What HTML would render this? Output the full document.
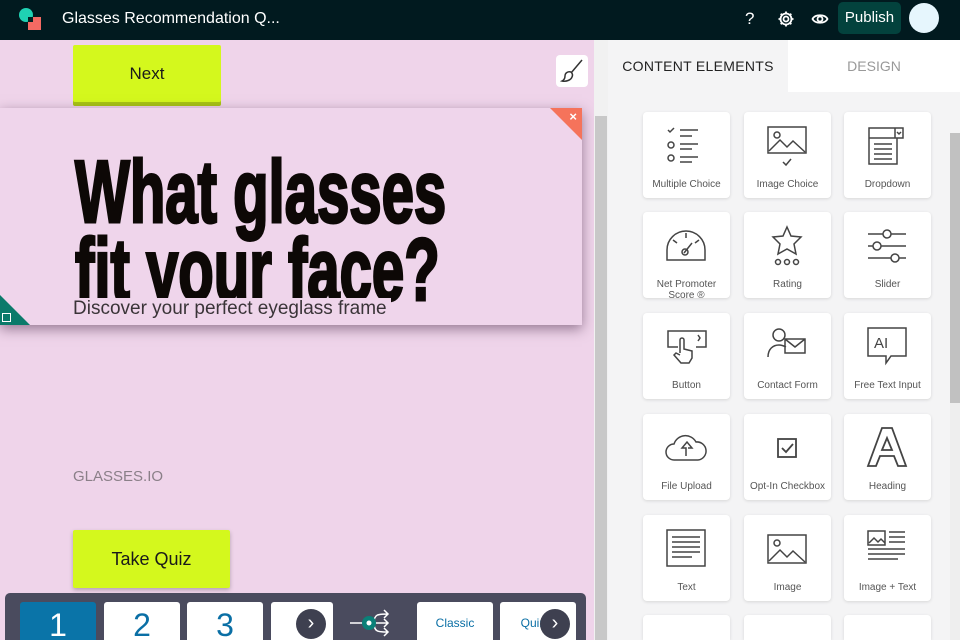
<!DOCTYPE html>
<html><head><meta charset="utf-8"><style>
*{margin:0;padding:0;box-sizing:border-box}
html,body{width:960px;height:640px;overflow:hidden}
body{font-family:"Liberation Sans",sans-serif;background:#f4f4f5;position:relative}
.top{position:absolute;left:0;top:0;width:960px;height:40px;background:#011a1f;color:#fff}
.canvas{position:absolute;left:0;top:40px;width:594px;height:600px;background:#efd4ea;overflow:hidden}
.sb{position:absolute;left:594px;top:40px;width:14px;height:600px;background:#f1f1f1}
.panel{position:absolute;left:608px;top:40px;width:352px;height:600px;background:#f4f4f5;overflow:hidden}
.card{position:absolute;width:87px;height:86px;background:#fff;border-radius:4px;box-shadow:0 1px 3px rgba(0,0,0,.12);text-align:center;font-size:10px;color:#555}
.card svg{position:absolute;left:21px;top:12px}
.card span{position:absolute;left:0;right:0;top:67px;line-height:11px}
.btn{position:absolute;background:#d4f81d;color:#1a1a1a;text-align:center;box-shadow:0 2px 4px rgba(0,0,0,.25);border-radius:2px}
.pg{position:absolute;top:562px;width:76px;height:38px;background:#fff;border-radius:3px 3px 0 0;color:#0a6fa5;font-size:32px;text-align:center;line-height:46px;overflow:hidden}
</style></head><body>
<div class="top">
 <svg style="position:absolute;left:18px;top:7px" width="26" height="24"><circle cx="8" cy="8" r="7" fill="#1fd1b3"/><rect x="10" y="10" width="13" height="13" fill="#f46a63"/><rect x="10" y="10" width="5" height="5" fill="#022"/></svg>
 <div style="position:absolute;left:62px;top:10px;font-size:16px">Glasses Recommendation Q...</div>
 <div style="position:absolute;left:745px;top:9px;font-size:17px">?</div>
 <svg style="position:absolute;left:777px;top:10px" width="18" height="18" viewBox="0 0 18 18" fill="none" stroke="#fff" stroke-width="1.8"><circle cx="9" cy="9" r="2.5"/><path d="M9 1.5v2.5M9 14v2.5M1.5 9h2.5M14 9h2.5M3.7 3.7l1.8 1.8M12.5 12.5l1.8 1.8M3.7 14.3l1.8-1.8M12.5 5.5l1.8-1.8"/><circle cx="9" cy="9" r="5.5"/></svg>
 <svg style="position:absolute;left:811px;top:10px" width="18" height="18" viewBox="0 0 18 18" fill="none" stroke="#fff" stroke-width="1.8"><path d="M1.5 9C4 4 14 4 16.5 9 14 14 4 14 1.5 9z"/><circle cx="9" cy="9" r="2.5"/></svg>
 <div style="position:absolute;left:838px;top:2px;width:63px;height:32px;background:#03423d;border-radius:5px;font-size:15px;line-height:32px;text-align:center">Publish</div>
 <div style="position:absolute;left:909px;top:3px;width:30px;height:30px;border-radius:50%;background:#e6f6fd"></div>
</div>
<div class="canvas">
 <div class="btn" style="left:73px;top:5px;width:148px;height:57px;line-height:57px;font-size:17px;box-shadow:0 4px 0 #a8c414">Next</div>
 <div style="position:absolute;left:556px;top:15px;width:32px;height:32px;background:#fff;border-radius:4px"><svg width="32" height="32" viewBox="0 0 32 32" fill="none" stroke="#333" stroke-width="1.5"><path d="M26 5L15 18M15 17c-3-1-6 1-6 4 0 2-1 4-3 5 4 1 9-1 10-4 1-2 0-4-1-5"/></svg></div>
 <div style="position:absolute;left:0;top:68px;width:582px;height:217px;background:#efd5eb;box-shadow:0 4px 12px rgba(60,30,60,.5);overflow:hidden">
  <div style="position:absolute;right:0;top:0;width:0;height:0;border-top:32px solid #f5735b;border-left:32px solid transparent"></div>
  <div style="position:absolute;right:5px;top:1px;color:#fff;font-size:13px;font-weight:bold">×</div>
  <div style="position:absolute;left:75px;top:45px;font-weight:bold;font-size:88px;line-height:78px;color:#0d0806;-webkit-text-stroke:3px #0d0806;transform:scaleX(0.66);transform-origin:left top;white-space:nowrap">What glasses<br>fit your face?</div>
  <div style="position:absolute;left:73px;top:190px;font-size:19px;color:#3a3438;background:#efd5eb;padding-right:4px">Discover your perfect eyeglass frame</div>
  <div style="position:absolute;left:0;bottom:0;width:0;height:0;border-bottom:30px solid #0a7a6a;border-right:30px solid transparent"></div>
  <div style="position:absolute;left:2px;bottom:3px;width:9px;height:9px;border:1.5px solid #fff"></div>
 </div>
 <div style="position:absolute;left:73px;top:428px;font-size:15px;color:#8a7f88">GLASSES.IO</div>
 <div class="btn" style="left:73px;top:490px;width:157px;height:58px;line-height:58px;font-size:18px">Take Quiz</div>
 <div style="position:absolute;left:5px;top:553px;width:581px;height:47px;background:#4a4b5e;border-radius:5px 5px 0 0"></div>
 <div class="pg" style="left:20px;background:#0a74a8;color:#fff">1</div>
 <div class="pg" style="left:104px">2</div>
 <div class="pg" style="left:187px">3</div>
 <div class="pg" style="left:271px;width:62px"></div>
 <div style="position:absolute;left:296px;top:569px;width:30px;height:30px;border-radius:50%;background:#3e4050;color:#fff;font-size:20px;text-align:center;line-height:29px">›</div>
 <svg style="position:absolute;left:348px;top:564px" width="44" height="36"><path d="M2 19h14M26 19h14M26 19c0-9 4-9 14-9M26 19c0 9 4 9 14 9M36 6l4 4-4 4M36 15l4 4-4 4M36 24l4 4-4 4" stroke="#fff" stroke-width="1.5" fill="none"/><circle cx="21" cy="19" r="7" fill="#0a8078"/><circle cx="21" cy="19" r="2.5" fill="#fff"/></svg>
 <div class="pg" style="left:417px;font-size:12px;line-height:42px">Classic</div>
 <div class="pg" style="left:500px;font-size:12px;line-height:42px">Quirky</div>
 <div style="position:absolute;left:540px;top:569px;width:30px;height:30px;border-radius:50%;background:#3e4050;color:#fff;font-size:20px;text-align:center;line-height:29px">›</div>
</div>
<div class="sb"><div style="position:absolute;left:1px;top:76px;width:12px;height:524px;background:#c8c8c8"></div></div>
<div class="panel">
 <div style="position:absolute;left:0;top:0;width:180px;height:52px;background:#f4f4f5;font-size:14px;color:#222;line-height:52px;text-align:center;letter-spacing:.3px">CONTENT ELEMENTS</div>
 <div style="position:absolute;left:180px;top:0;width:172px;height:52px;background:#fff;font-size:14px;color:#999;line-height:52px;text-align:center">DESIGN</div>
 <div style="position:absolute;left:342px;top:93px;width:10px;height:507px;background:#eee"><div style="width:10px;height:270px;background:#c1c1c1"></div></div>
 <div class="card" style="left:35px;top:72px"><svg width="44" height="44" viewBox="0 0 44 44" fill="none" stroke="#444" stroke-width="1.5"><path d="M4 6l2 2 4-4"/><circle cx="7" cy="21" r="3"/><circle cx="7" cy="34" r="3"/><path d="M16 6h18M16 12h12M16 20h18M16 25h12M16 33h18M16 38h12"/></svg><span>Multiple Choice</span></div>
 <div class="card" style="left:136px;top:72px"><svg width="44" height="44" viewBox="0 0 44 44" fill="none" stroke="#444" stroke-width="1.5"><rect x="3" y="3" width="38" height="26"/><circle cx="12" cy="11" r="3"/><path d="M4 27l11-11 7 7 6-6 12 11M18 38l3 3 5-6"/></svg><span>Image Choice</span></div>
 <div class="card" style="left:236px;top:72px"><svg width="44" height="44" viewBox="0 0 44 44" fill="none" stroke="#444" stroke-width="1.5"><path d="M4 4h34v10H4zM4 14v26h28V14M30 4v10M32 8l2 2 2-2M9 20h18M9 25h18M9 30h18M9 35h18"/></svg><span>Dropdown</span></div>
 <div class="card" style="left:35px;top:172px"><svg width="44" height="44" viewBox="0 0 44 44" fill="none" stroke="#444" stroke-width="1.5"><path d="M3 36V26a19 19 0 0138 0v10zM22 9v5M9 16l4 3M35 16l-4 3M20 29l8-10"/><circle cx="21" cy="28" r="3"/></svg><span>Net Promoter<br>Score ®</span></div>
 <div class="card" style="left:136px;top:172px"><svg width="44" height="44" viewBox="0 0 44 44" fill="none" stroke="#444" stroke-width="1.5"><path d="M22 3l4 9 10 1-7 7 2 10-9-5-9 5 2-10-7-7 10-1z"/><circle cx="13" cy="38" r="2.5"/><circle cx="22" cy="38" r="2.5"/><circle cx="31" cy="38" r="2.5"/></svg><span>Rating</span></div>
 <div class="card" style="left:236px;top:172px"><svg width="44" height="44" viewBox="0 0 44 44" fill="none" stroke="#444" stroke-width="1.5"><path d="M3 10h38M3 22h38M3 34h38"/><circle cx="22" cy="10" r="4" fill="#fff"/><circle cx="12" cy="22" r="4" fill="#fff"/><circle cx="30" cy="34" r="4" fill="#fff"/></svg><span>Slider</span></div>
 <div class="card" style="left:35px;top:273px"><svg width="44" height="44" viewBox="0 0 44 44" fill="none" stroke="#444" stroke-width="1.5"><path d="M14 22H4V6h38v16H32M34 10l2 3-2 3M16 28V15a2 2 0 014 0v9l8 2v7l-3 5H17l-7-8 2-2 4 2"/></svg><span>Button</span></div>
 <div class="card" style="left:136px;top:273px"><svg width="44" height="44" viewBox="0 0 44 44" fill="none" stroke="#444" stroke-width="1.5"><circle cx="14" cy="10" r="6"/><path d="M3 32c0-8 5-12 11-12 3 0 5 1 7 2M20 14h20v14H20zM20 14l10 8 10-8"/></svg><span>Contact Form</span></div>
 <div class="card" style="left:236px;top:273px"><svg width="44" height="44" viewBox="0 0 44 44" fill="none" stroke="#444" stroke-width="1.5"><path d="M3 3h38v28H26l-5 7v-7H3z"/><text x="9" y="23" font-size="15" fill="#444" stroke="none" font-family="Liberation Sans">AI</text></svg><span>Free Text Input</span></div>
 <div class="card" style="left:35px;top:374px"><svg width="44" height="44" viewBox="0 0 44 44" fill="none" stroke="#444" stroke-width="1.5"><path d="M10 34a8 8 0 010-16 12 12 0 0122-2 9 9 0 012 18zM22 30v-8h-4l5-6 5 6h-4"/></svg><span>File Upload</span></div>
 <div class="card" style="left:136px;top:374px"><svg width="44" height="44" viewBox="0 0 44 44" fill="none" stroke="#444" stroke-width="1.8"><rect x="13" y="13" width="18" height="18"/><path d="M17 22l4 4 7-8"/></svg><span>Opt-In Checkbox</span></div>
 <div class="card" style="left:236px;top:374px"><svg width="44" height="44" viewBox="0 0 44 44" fill="none" stroke="#444" stroke-width="1.8"><path d="M17 2h10l14 38h-8l-4-10H15l-4 10H3zM22 12l-5 12h10z"/></svg><span>Heading</span></div>
 <div class="card" style="left:35px;top:475px"><svg width="44" height="44" viewBox="0 0 44 44" fill="none" stroke="#444" stroke-width="1.5"><rect x="3" y="3" width="38" height="36"/><path d="M8 10h28M8 15h28M8 20h28M8 25h28M8 30h20"/></svg><span>Text</span></div>
 <div class="card" style="left:136px;top:475px"><svg width="44" height="44" viewBox="0 0 44 44" fill="none" stroke="#444" stroke-width="1.5"><rect x="3" y="8" width="38" height="28"/><circle cx="12" cy="16" r="3"/><path d="M4 34l11-11 7 7 6-6 12 11"/></svg><span>Image</span></div>
 <div class="card" style="left:236px;top:475px"><svg width="44" height="44" viewBox="0 0 44 44" fill="none" stroke="#444" stroke-width="1.5"><rect x="3" y="4" width="17" height="14"/><path d="M4 16l5-5 4 4 3-3 4 4M24 5h16M24 10h16M24 15h16M3 22h37M3 27h37M3 32h30"/></svg><span>Image + Text</span></div>
 <div class="card" style="left:35px;top:575px;height:25px;border-radius:4px 4px 0 0"></div>
 <div class="card" style="left:136px;top:575px;height:25px;border-radius:4px 4px 0 0"></div>
 <div class="card" style="left:236px;top:575px;height:25px;border-radius:4px 4px 0 0"></div>
</div>
</body></html>
